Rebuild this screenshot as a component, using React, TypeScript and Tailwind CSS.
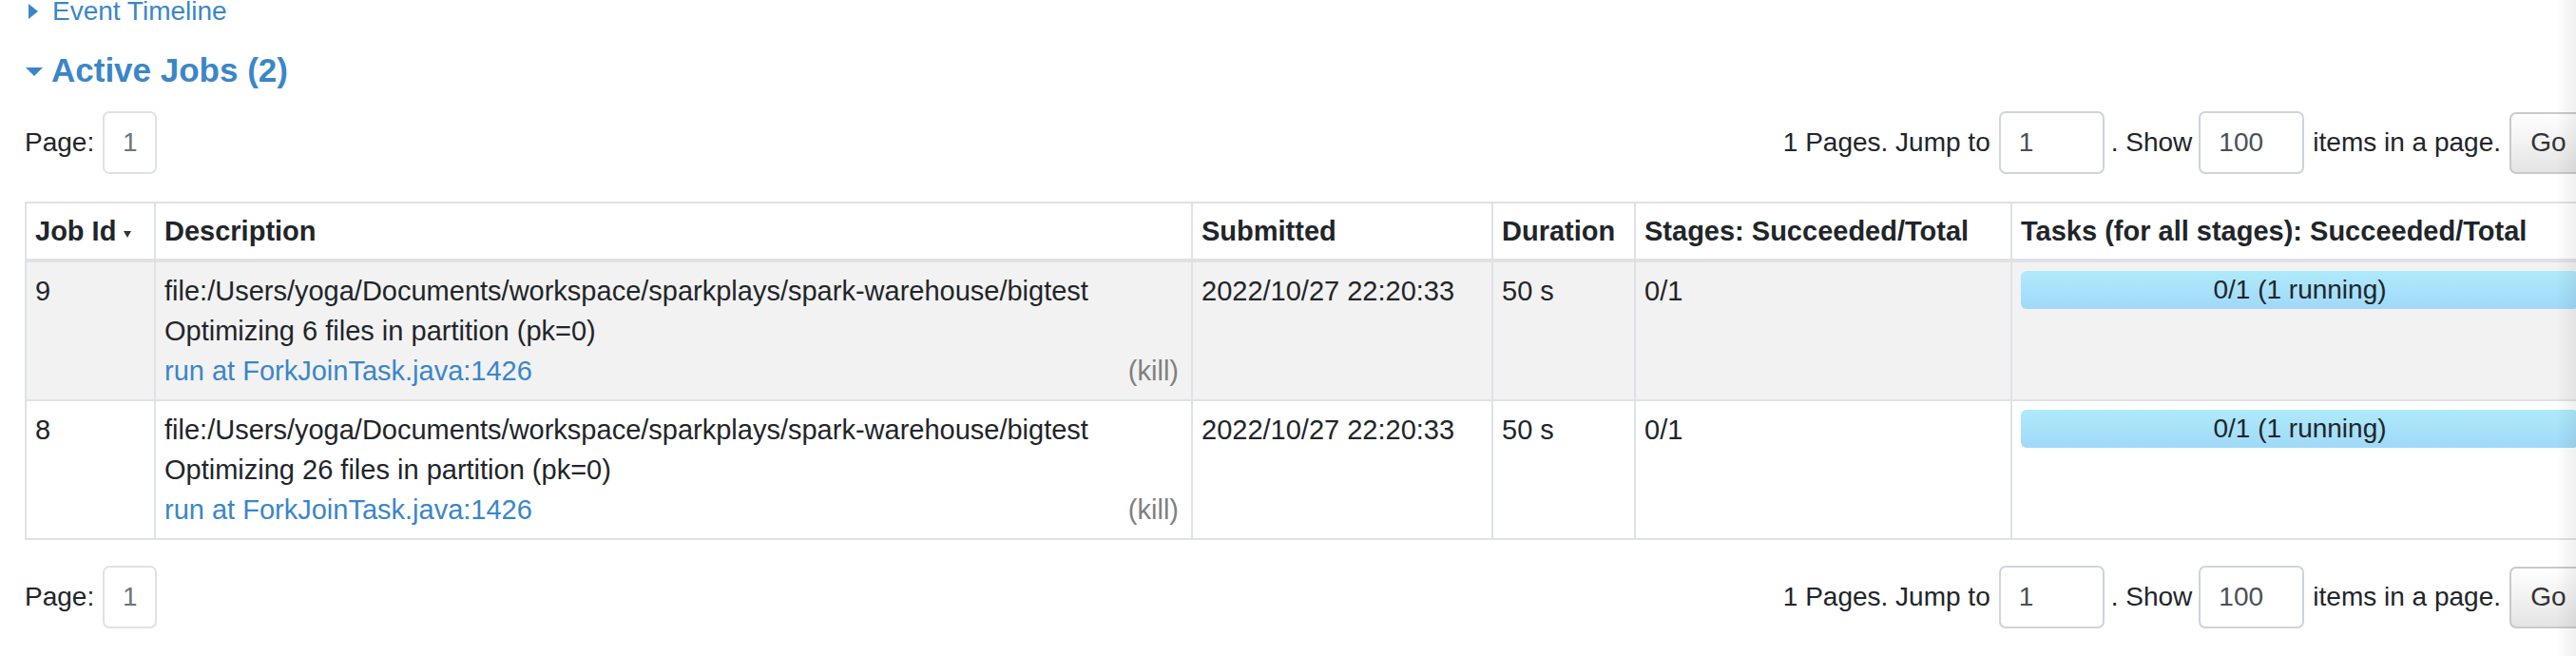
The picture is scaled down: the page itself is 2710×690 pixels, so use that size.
import React from "react";

const LINK = "text-[#3a86c8]";

function PagerRow() {
  return (
    <div className="flex h-[66px] items-center justify-between text-[28px] leading-[42px]">
      <div className="flex items-center">
        <span>Page:</span>
        <div className="ml-[9px] flex h-[66px] w-[57px] items-center justify-center rounded-[7px] border-2 border-[#dee2e6] text-[#6c757d]">
          1
        </div>
      </div>
      <div className="flex items-center">
        <span>1 Pages. Jump to</span>
        <div className="ml-[9px] flex h-[66px] w-[111px] items-center rounded-[7px] border-2 border-[#ced4da] pl-[19px] text-[#495057]">
          1
        </div>
        <span className="ml-[7px]">. Show</span>
        <div className="ml-[7px] flex h-[66px] w-[111px] items-center rounded-[7px] border-2 border-[#ced4da] pl-[19px] text-[#495057]">
          100
        </div>
        <span className="ml-[9px]">items in a page.</span>
        <div className="ml-[9px] flex h-[65px] w-[82px] items-center justify-center rounded-[7px] border-2 border-[#c9c9c9] bg-gradient-to-b from-white to-[#e4e4e4] text-[#333]">
          Go
        </div>
      </div>
    </div>
  );
}

const th =
  "border-2 border-b-4 border-[#dee2e6] px-[9px] py-[8px] text-left align-top font-bold text-[29px] leading-[42px]";
const td =
  "border-2 border-[#dee2e6] px-[9px] py-[9px] align-top text-[29px] leading-[42px]";

function JobRow({ id, files, striped }: { id: string; files: string; striped: boolean }) {
  return (
    <tr className={striped ? "bg-[#f2f2f2]" : "bg-white"}>
      <td className={td}>{id}</td>
      <td className={td}>
        <div>file:/Users/yoga/Documents/workspace/sparkplays/spark-warehouse/bigtest</div>
        <div>Optimizing {files} files in partition (pk=0)</div>
        <div className="flex justify-between">
          <a className={LINK}>run at ForkJoinTask.java:1426</a>
          <a className="mr-[4px] text-[#808080]">(kill)</a>
        </div>
      </td>
      <td className={td}>2022/10/27 22:20:33</td>
      <td className={td}>50 s</td>
      <td className={td}>0/1</td>
      <td className={td}>
        <div className="flex h-[40px] items-center justify-center rounded-[6px] bg-gradient-to-b from-[#aeeafc] to-[#a0d9f8] text-[28px] leading-[40px] text-[#212529]">
          0/1 (1 running)
        </div>
      </td>
    </tr>
  );
}

export default function App() {
  return (
    <div className="relative h-[690px] w-[2710px] overflow-hidden bg-white font-['Liberation_Sans',Arial,sans-serif] text-[#212529]">
      <div className="ml-[26px] flex w-[2696px] flex-col">
        {/* Event Timeline */}
        <div className={`flex h-[24px] items-center text-[28px] leading-[24px] ${LINK}`}>
          <span className="ml-[4px] h-0 w-0 border-y-[8px] border-l-[10px] border-y-transparent border-l-[#3a86c8]" />
          <a className="ml-[15px]">Event Timeline</a>
        </div>

        {/* Active Jobs */}
        <div className={`mt-[29px] flex h-[42px] items-center text-[35px] font-bold leading-[42px] ${LINK}`}>
          <span className="ml-[1px] mt-[2px] h-0 w-0 border-x-[9px] border-t-[9px] border-x-transparent border-t-[#3a86c8]" />
          <a className="ml-[9px]">Active Jobs (2)</a>
        </div>

        <div className="mt-[22px]">
          <PagerRow />
        </div>

        <table className="mt-[29px] w-[2696px] table-fixed border-collapse">
          <colgroup>
            <col className="w-[136px]" />
            <col className="w-[1091px]" />
            <col className="w-[316px]" />
            <col className="w-[150px]" />
            <col className="w-[396px]" />
            <col className="w-[607px]" />
          </colgroup>
          <thead>
            <tr className="bg-white">
              <th className={th}>
                <span className="inline-flex items-center">
                  Job Id
                  <svg className="ml-[8px] mt-[6px]" width="8" height="7" viewBox="0 0 8 7">
                    <path d="M0 0 H8 L4 7 Z" fill="#333" />
                  </svg>
                </span>
              </th>
              <th className={th}>Description</th>
              <th className={th}>Submitted</th>
              <th className={th}>Duration</th>
              <th className={th}>Stages: Succeeded/Total</th>
              <th className={th}>Tasks (for all stages): Succeeded/Total</th>
            </tr>
          </thead>
          <tbody>
            <JobRow id="9" files="6" striped />
            <JobRow id="8" files="26" striped={false} />
          </tbody>
        </table>

        <div className="mt-[27px]">
          <PagerRow />
        </div>
      </div>
      <div className="pointer-events-none absolute right-0 top-0 h-full w-[22px] bg-gradient-to-r from-transparent to-black/[0.06]" />
    </div>
  );
}
